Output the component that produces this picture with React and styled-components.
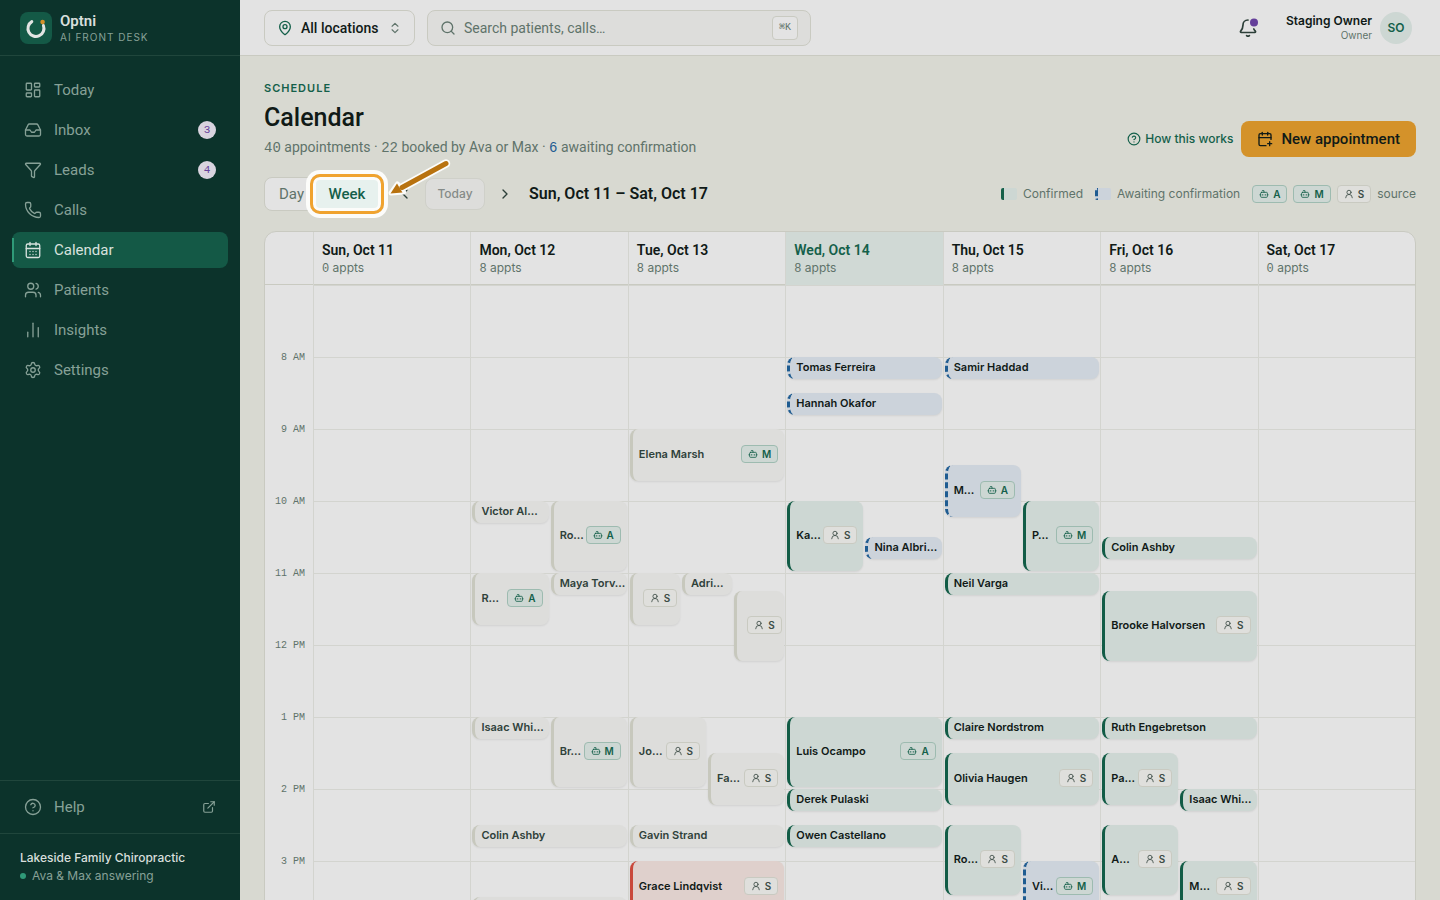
import React from 'react';
import styled, { createGlobalStyle, css } from 'styled-components';
import {
  LayoutDashboard, Inbox, Phone, CalendarDays, Users, ChartNoAxesColumn, Settings, Funnel,
  CircleQuestionMark, ExternalLink, MapPin, ChevronsUpDown, Search, CalendarPlus, ChevronLeft,
  ChevronRight, Bot, UserRound,
} from 'lucide-react';

const c = {
  side: '#0c332b', sideLine: '#20463c', sideText: '#87a197', active: '#145946', mint: '#2f9a78',
  page: '#d8d9d1', card: '#e3e3e3', line: '#c9cac1', soft: '#d3d4cf', ink: '#101a17',
  muted: '#5f736a', green: '#14604a', greenBg: '#cdd7d3', blue: '#1f5c91', blueBg: '#ccd3db',
  amber: '#d4922a', purple: '#65409a',
};
const body = 'Roboto, "Liberation Sans", sans-serif';
const small = 'Inter, "Liberation Sans", sans-serif';
const mono = '"Liberation Mono", monospace';

const Global = createGlobalStyle`
  * { box-sizing: border-box; }
  body { margin: 0; background: ${c.page}; color: ${c.ink}; font: 400 15px/20px ${body}; }
  button, input { font: inherit; color: inherit; }
  button { cursor: pointer; }
  a { color: inherit; text-decoration: none; }
  h1, p { margin: 0; }
`;

const Shell = styled.div`display: flex; height: 100vh; overflow: hidden;`;
const Sidebar = styled.aside`
  width: 240px; flex: none; display: flex; flex-direction: column;
  background: ${c.side}; color: ${c.sideText};
`;
const Brand = styled.div`
  height: 56px; display: flex; align-items: center; gap: 8px; padding: 0 20px;
  border-bottom: 1px solid ${c.sideLine};
`;
const BrandName = styled.div`font-size: 15px; line-height: 18px; font-weight: 600; color: #d8dfdc;`;
const BrandTag = styled.div`font: 400 10px/14px ${small}; letter-spacing: 1px;`;
const Nav = styled.nav`flex: 1; display: flex; flex-direction: column; gap: 4px; padding: 16px 12px;`;
const NavLink = styled.a`
  position: relative; height: 36px; display: flex; align-items: center; gap: 12px;
  padding: 0 12px; border-radius: 8px;
  svg { flex: none; }
  ${p => p.$active && css`
    background: ${c.active}; color: #d8e2de;
    &::before { content: ''; position: absolute; left: 0; top: 6px; bottom: 6px; width: 2px; background: ${c.mint}; }
  `}
`;
const NavText = styled.span`flex: 1;`;
const Count = styled.span`
  width: 18px; height: 18px; border-radius: 9px; background: #d9d4df; color: ${c.purple};
  font: 400 11px/18px ${mono}; text-align: center;
`;
const HelpBox = styled.div`padding: 8px 12px; border-top: 1px solid ${c.sideLine}; border-bottom: 1px solid ${c.sideLine};`;
const Practice = styled.div`padding: 15px 20px; font: 500 12px/18px ${small}; color: #d8dfdc;`;
const Status = styled.div`
  display: flex; align-items: center; gap: 6px; color: ${c.sideText}; font-weight: 400;
  &::before { content: ''; width: 6px; height: 6px; border-radius: 3px; background: ${c.mint}; }
`;

const Column = styled.div`flex: 1; min-width: 0; display: flex; flex-direction: column;`;
const TopBar = styled.header`
  height: 56px; flex: none; display: flex; align-items: center; gap: 12px; padding: 0 28px 0 24px;
  background: ${c.card}; border-bottom: 1px solid ${c.line};
`;
const LocationButton = styled.button`
  height: 36px; display: flex; align-items: center; gap: 8px; padding: 0 12px; width: 151px;
  border: 1px solid ${c.line}; border-radius: 8px; background: ${c.card};
  font-size: 14px; font-weight: 500; white-space: nowrap;
  svg { flex: none; }
  svg:last-child { margin-left: auto; }
`;
const SearchBox = styled.label`
  height: 36px; flex: 0 1 384px; display: flex; align-items: center; gap: 8px; padding: 0 12px;
  border: 1px solid ${c.line}; border-radius: 8px; background: #dddddb; color: ${c.muted};
`;
const SearchInput = styled.input.attrs({ type: 'text' })`
  flex: 1; min-width: 0; border: 0; padding: 0; background: none; outline: none; font-size: 14px;
  &::placeholder { color: ${c.muted}; opacity: 1; }
`;
const Kbd = styled.kbd`
  padding: 0 6px; height: 24px; border: 1px solid ${c.line}; border-radius: 4px;
  background: ${c.card}; font: 400 10px/22px ${mono};
`;
const BellButton = styled.button`
  position: relative; width: 36px; height: 36px; margin-left: auto; border: 0; background: none; padding: 8px; color: #2c3f38;
`;
const User = styled.div`display: flex; align-items: center; gap: 8px; margin-left: 8px; text-align: right;`;
const UserName = styled.div`font: 600 12px/14px ${small};`;
const UserRole = styled.div`font: 400 10px/14px ${small}; color: ${c.muted};`;
const Avatar = styled.div`
  width: 32px; height: 32px; border-radius: 16px; background: ${c.greenBg}; color: ${c.green};
  font: 600 12px/32px ${small}; text-align: center;
`;

const Main = styled.main`flex: 1; min-height: 0; padding: 24px; overflow-y: auto; scrollbar-width: none;`;
const PageHead = styled.div`display: flex; align-items: flex-end; justify-content: space-between;`;
const Eyebrow = styled.p`font: 600 11px/16px ${small}; letter-spacing: 1px; color: ${c.green};`;
const Title = styled.h1`font-size: 25px; line-height: 34px; font-weight: 500; margin: 5px 0 2px;`;
const Summary = styled.p`color: ${c.muted}; font-size: 14px; line-height: 20px;`;
const Num = styled.span`font-family: ${mono}; line-height: 14px; color: ${p => (p.$blue ? c.blue : 'inherit')};`;
const Actions = styled.div`display: flex; align-items: center; gap: 8px;`;
const HowLink = styled.a`display: flex; align-items: center; gap: 4px; font: 500 12px/16px ${small}; color: ${c.green};`;
const Primary = styled.button`
  height: 36px; display: flex; align-items: center; gap: 8px; padding: 0 16px;
  border: 0; border-radius: 8px; background: ${c.amber}; font-weight: 500;
`;
const Toolbar = styled.div`display: flex; align-items: center; margin: 20px 0; height: 34px;`;
const Segment = styled.div`
  height: 34px; display: flex; padding: 2px; border: 1px solid ${c.line}; border-radius: 8px; background: ${c.card};
`;
const SegmentButton = styled.button`
  position: relative; width: ${p => (p.$active ? 62 : 49)}px; border: 0; padding: 0; background: none; color: ${c.muted};
  ${p => p.$active && css`background: #e7f1ee; color: ${c.green}; font-weight: 500;`}
`;
const Spotlight = styled.span`
  position: absolute; inset: -6px; border: 3px solid #f0a32f; border-radius: 10px;
  box-shadow: 0 0 0 4px #fcfcfa, inset 0 0 0 3px #fcfcfa; pointer-events: none;
`;
const Pointer = styled.svg`position: absolute; left: 68px; top: -24px; z-index: 2; pointer-events: none;`;
const Pager = styled.div`display: flex; align-items: center; gap: 4px; margin: 0 8px;`;
const Arrow = styled.button`
  width: 32px; height: 32px; display: grid; place-items: center; border: 0; padding: 0; background: none; color: #2c3f38;
`;
const TodayButton = styled.button`
  width: 60px; height: 32px; border: 1px solid #cfd0c9; border-radius: 8px; background: #dddddb;
  font: 500 12px/16px ${small}; color: #858b88; padding: 0;
`;
const Range = styled.div`font-size: 16px; font-weight: 600; white-space: nowrap;`;
const Legend = styled.div`
  display: flex; align-items: center; gap: 6px; margin-left: auto; font: 400 12px/16px ${small}; color: ${c.muted}; white-space: nowrap;
`;
const LegendItem = styled.span`display: flex; align-items: center; gap: 6px; margin-right: 6px;`;
const Swatch = styled.i`
  width: 16px; height: 12px; border-radius: 2px;
  background: ${p => (p.$blue ? c.blueBg : c.greenBg)};
  border-left: 3px ${p => (p.$blue ? `dashed ${c.blue}` : `solid ${c.green}`)};
`;
const Badge = styled.span`
  flex: none; height: 18px; display: inline-flex; align-items: center; gap: 4px; padding: 0 6px;
  border: 1px solid ${p => (p.$staff ? c.line : '#9dbbb0')}; border-radius: 4px;
  background: ${p => (p.$staff ? '#dfdfdc' : c.greenBg)}; color: ${p => (p.$staff ? '#3c4c46' : c.green)};
  font: 600 10px/16px ${small};
`;

const Calendar = styled.section`
  border: 1px solid ${c.line}; border-radius: 12px; background: ${c.card}; overflow: hidden;
`;
const Week = styled.div`display: grid; grid-template-columns: 48px repeat(7, minmax(0, 1fr));`;
const WeekHead = styled(Week)`height: 53px; border-bottom: 1px solid ${c.line};`;
const DayHead = styled.div`
  padding: 8px; border-left: 1px solid ${c.soft}; font-size: 14px; line-height: 20px; font-weight: 600;
  ${p => p.$today && css`background: #d0d9d5; color: ${c.green};`}
`;
const DayCount = styled.div`
  font: 400 12px/16px ${small}; color: ${c.muted};
  span { font-family: ${mono}; }
`;
const Hours = styled.div`
  padding: 67px 8px 0 0; text-align: right; font: 400 10px/12px ${mono}; color: ${c.muted};
  div { height: 72px; }
`;
const Day = styled.div`
  display: grid; grid-template-columns: repeat(6, minmax(0, 1fr)); grid-template-rows: repeat(132, 6px);
  border-left: 1px solid ${c.soft};
  background: linear-gradient(${c.soft} 1px, transparent 1px) 0 0 / 100% 72px;
`;
const tones = {
  past: ['#dddddb', 'solid #c7c8bd', '#2f413a'],
  ok: [c.greenBg, 'solid #125c46', c.ink],
  wait: [c.blueBg, `dashed ${c.blue}`, c.ink],
  late: ['#dfd0cc', 'solid #c9483b', c.ink],
};
const Appt = styled.div`
  grid-row: ${p => p.$row} / span ${p => p.$span}; grid-column: ${p => p.$col} / span ${p => p.$wide};
  margin: 0 1px 2px; min-width: 0; display: flex; align-items: center; gap: 4px; padding: 0 6px 2px;
  border-left: 3px ${p => tones[p.$tone][1]}; border-radius: 8px;
  background: ${p => tones[p.$tone][0]}; color: ${p => tones[p.$tone][2]};
  box-shadow: 0 1px 2px rgba(0, 0, 0, 0.08); font: 600 11px/16px ${small};
`;
const Name = styled.span`flex: 1; min-width: 0; white-space: nowrap;`;

const Source = ({ by }) => (
  <Badge $staff={by === 'S'}>
    {by === 'S' ? <UserRound size={10} /> : <Bot size={10} />}{by}
  </Badge>
);

const nav = [
  ['Today', LayoutDashboard], ['Inbox', Inbox, 3], ['Leads', Funnel, 4], ['Calls', Phone],
  ['Calendar', CalendarDays], ['Patients', Users], ['Insights', ChartNoAxesColumn], ['Settings', Settings],
];

// Each appointment: start hour, minutes, first of six lanes, lanes wide, name, status, source
const days = [
  { label: 'Sun, Oct 11', n: 0, items: [] },
  { label: 'Mon, Oct 12', n: 8, items: [
    [10, 20, 1, 3, 'Victor Al…', 'past'], [10, 60, 4, 3, 'Ro…', 'past', 'A'],
    [11, 45, 1, 3, 'R…', 'past', 'A'], [11, 20, 4, 3, 'Maya Torv…', 'past'],
    [13, 20, 1, 3, 'Isaac Whi…', 'past'], [13, 60, 4, 3, 'Br…', 'past', 'M'],
    [14.5, 20, 1, 6, 'Colin Ashby', 'past'], [15.5, 45, 1, 6, '', 'past'],
  ] },
  { label: 'Tue, Oct 13', n: 8, items: [
    [9, 45, 1, 6, 'Elena Marsh', 'past', 'M'], [11, 45, 1, 2, '', 'past', 'S'],
    [11, 20, 3, 2, 'Adri…', 'past'], [11.25, 60, 5, 2, '', 'past', 'S'],
    [13, 60, 1, 3, 'Jo…', 'past', 'S'], [13.5, 45, 4, 3, 'Fa…', 'past', 'S'],
    [14.5, 20, 1, 6, 'Gavin Strand', 'past'], [15, 45, 1, 6, 'Grace Lindqvist', 'late', 'S'],
  ] },
  { label: 'Wed, Oct 14', n: 8, today: true, items: [
    [8, 20, 1, 6, 'Tomas Ferreira', 'wait'], [8.5, 20, 1, 6, 'Hannah Okafor', 'wait'],
    [10, 60, 1, 3, 'Ka…', 'ok', 'S'], [10.5, 20, 4, 3, 'Nina Albri…', 'wait'],
    [13, 60, 1, 6, 'Luis Ocampo', 'ok', 'A'], [14, 20, 1, 6, 'Derek Pulaski', 'ok'],
    [14.5, 20, 1, 6, 'Owen Castellano', 'ok'],
  ] },
  { label: 'Thu, Oct 15', n: 8, items: [
    [8, 20, 1, 6, 'Samir Haddad', 'wait'], [9.5, 45, 1, 3, 'M…', 'wait', 'A'],
    [10, 60, 4, 3, 'P…', 'ok', 'M'], [11, 20, 1, 6, 'Neil Varga', 'ok'],
    [13, 20, 1, 6, 'Claire Nordstrom', 'ok'], [13.5, 45, 1, 6, 'Olivia Haugen', 'ok', 'S'],
    [14.5, 60, 1, 3, 'Ro…', 'ok', 'S'], [15, 45, 4, 3, 'Vi…', 'wait', 'M'],
  ] },
  { label: 'Fri, Oct 16', n: 8, items: [
    [10.5, 20, 1, 6, 'Colin Ashby', 'ok'], [11.25, 60, 1, 6, 'Brooke Halvorsen', 'ok', 'S'],
    [13, 20, 1, 6, 'Ruth Engebretson', 'ok'], [13.5, 45, 1, 3, 'Pa…', 'ok', 'S'],
    [14, 20, 4, 3, 'Isaac Whi…', 'ok'], [14.5, 60, 1, 3, 'A…', 'ok', 'S'],
    [15, 45, 4, 3, 'M…', 'ok', 'S'],
  ] },
  { label: 'Sat, Oct 17', n: 0, items: [] },
];
const hours = ['8 AM', '9 AM', '10 AM', '11 AM', '12 PM', '1 PM', '2 PM', '3 PM', '4 PM', '5 PM'];

export default function App() {
  return (
    <Shell>
      <Global />
      <Sidebar>
        <Brand>
          <svg width="32" height="32" viewBox="0 0 32 32" fill="none" aria-hidden="true">
            <rect width="32" height="32" rx="8" fill={c.active} />
            <path d="M11.8 9.600A8 8 0 1 0 23.400 13.500" stroke="#e2e5e3" strokeWidth="3" strokeLinecap="round" />
            <circle cx="22.6" cy="10" r="2.3" fill={c.amber} />
          </svg>
          <div><BrandName>Optni</BrandName><BrandTag>AI FRONT DESK</BrandTag></div>
        </Brand>
        <Nav>
          {nav.map(([label, Icon, count]) => (
            <NavLink key={label} href="#" $active={label === 'Calendar'}>
              <Icon size={18} strokeWidth={1.75} /><NavText>{label}</NavText>{count && <Count>{count}</Count>}
            </NavLink>
          ))}
        </Nav>
        <HelpBox>
          <NavLink href="#"><CircleQuestionMark size={18} strokeWidth={1.75} /><NavText>Help</NavText><ExternalLink size={14} /></NavLink>
        </HelpBox>
        <Practice>Lakeside Family Chiropractic<Status>Ava &amp; Max answering</Status></Practice>
      </Sidebar>
      <Column>
        <TopBar>
          <LocationButton>
            <MapPin size={16} color={c.green} />All locations<ChevronsUpDown size={14} color={c.muted} />
          </LocationButton>
          <SearchBox>
            <Search size={16} />
            <SearchInput placeholder="Search patients, calls…" aria-label="Search" />
            <Kbd>⌘K</Kbd>
          </SearchBox>
          <BellButton aria-label="Notifications">
            <svg width="20" height="20" viewBox="0 0 20 20" fill="none" stroke="currentColor" strokeWidth="1.7" strokeLinecap="round" strokeLinejoin="round">
              <path d="M10 2C6.800 2 5 4.300 5 7c0 3.500-1.200 4.800-2.400 6.200-.4.500-.1 1.300.6 1.300h13.600c.7 0 1-.8.6-1.300-.6-.7-1.200-1.300-1.600-2.200M8.600 17.600c.7.600 2.100.6 2.800 0" />
              <circle cx="16" cy="4.500" r="4" fill={c.purple} stroke="none" />
            </svg>
          </BellButton>
          <User>
            <div><UserName>Staging Owner</UserName><UserRole>Owner</UserRole></div>
            <Avatar>SO</Avatar>
          </User>
        </TopBar>
        <Main>
          <PageHead>
            <div>
              <Eyebrow>SCHEDULE</Eyebrow>
              <Title>Calendar</Title>
              <Summary>
                <Num>40</Num> appointments · <Num>22</Num> booked by Ava or Max · <Num $blue>6</Num> awaiting confirmation
              </Summary>
            </div>
            <Actions>
              <HowLink href="#"><CircleQuestionMark size={14} />How this works</HowLink>
              <Primary><CalendarPlus size={16} />New appointment</Primary>
            </Actions>
          </PageHead>
          <Toolbar>
            <Segment>
              <SegmentButton>Day</SegmentButton>
              <SegmentButton $active>
                Week<Spotlight />
                <Pointer width="72" height="46" viewBox="0 0 72 46" aria-hidden="true">
                  <g fill="none" stroke="#fcfcfa" strokeLinecap="round" strokeLinejoin="round">
                    <path d="M19 31 62 7.500" strokeWidth="8.500" />
                    <path d="M7 37 13.500 28 19.500 36z" strokeWidth="5" />
                  </g>
                  <path d="M18 31.500 62 7.500" stroke="#b8720f" strokeWidth="5" strokeLinecap="round" />
                  <path d="M6.500 37.500 13 27.500 18.500 36.500z" fill="#b8720f" />
                </Pointer>
              </SegmentButton>
            </Segment>
            <Pager>
              <Arrow aria-label="Previous week"><ChevronLeft size={16} /></Arrow>
              <TodayButton>Today</TodayButton>
              <Arrow aria-label="Next week"><ChevronRight size={16} /></Arrow>
            </Pager>
            <Range>Sun, Oct 11 – Sat, Oct 17</Range>
            <Legend>
              <LegendItem><Swatch />Confirmed</LegendItem>
              <LegendItem><Swatch $blue />Awaiting confirmation</LegendItem>
              <Source by="A" /><Source by="M" /><Source by="S" />source
            </Legend>
          </Toolbar>
          <Calendar>
            <WeekHead>
              <div />
              {days.map(d => (
                <DayHead key={d.label} $today={d.today}>{d.label}<DayCount><span>{d.n}</span> appts</DayCount></DayHead>
              ))}
            </WeekHead>
            <Week>
              <Hours>{hours.map(h => <div key={h}>{h}</div>)}</Hours>
              {days.map(d => (
                <Day key={d.label}>
                  {d.items.map(([start, mins, lane, wide, name, tone, by], i) => (
                    <Appt key={i} $row={(start - 7) * 12 + 1} $span={mins / 5} $col={lane} $wide={wide} $tone={tone}>
                      <Name>{name}</Name>{by && <Source by={by} />}
                    </Appt>
                  ))}
                </Day>
              ))}
            </Week>
          </Calendar>
        </Main>
      </Column>
    </Shell>
  );
}
